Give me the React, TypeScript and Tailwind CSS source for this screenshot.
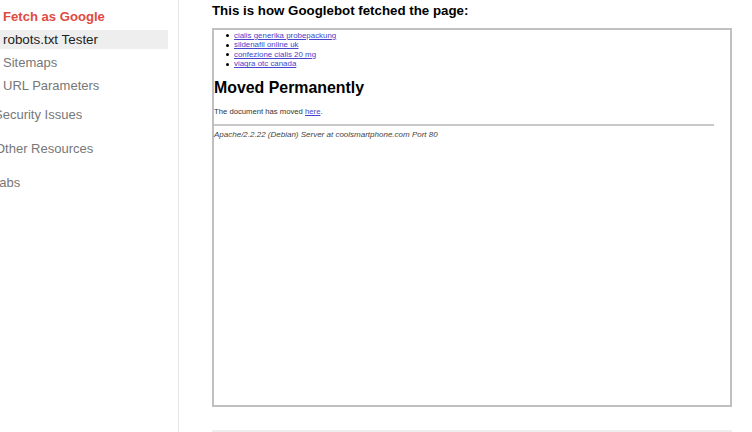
const font = { fontFamily: '"Liberation Sans", Arial, sans-serif' };

const links = ['cialis generika probepackung', 'sildenafil online uk', 'confezione cialis 20 mg', 'viagra otc canada'];

function SideItem({ label, active }: { label: string; active?: boolean }) {
  return (
    <div className={`h-[19px] w-[168px] pl-[3px] leading-[19px] ${active ? 'bg-[#eeeeee] text-[13.4px] text-[#222222]' : 'text-[13px] text-[#777777]'}`}>
      {label}
    </div>
  );
}

function SideGroup({ label, className }: { label: string; className: string }) {
  return <div className={`h-[19px] whitespace-nowrap text-[13px] leading-[19px] text-[#777777] ${className}`}>{label}</div>;
}

export default function App() {
  return (
    <div className="flex h-[432px] w-[752px] overflow-hidden bg-white" style={font}>
      {/* Left nav, cut off at the window edge */}
      <div className="h-full w-[179px] shrink-0 overflow-hidden border-r border-[#e5e5e5] pt-[7px]">
        <div className="h-[23px] pl-[3px] text-[13.1px] font-bold leading-[19px] text-[#e04a3f]">Fetch as Google</div>
        <SideItem label="robots.txt Tester" active />
        <div className="mt-[4px]">
          <SideItem label="Sitemaps" />
        </div>
        <div className="mt-[4px]">
          <SideItem label="URL Parameters" />
        </div>
        <SideGroup label="Security Issues" className="-ml-[6px] mt-[10px]" />
        <SideGroup label="Other Resources" className="-ml-[5px] mt-[15px]" />
        <SideGroup label="Labs" className="-ml-[8px] mt-[15px]" />
      </div>

      {/* Main column */}
      <div className="ml-[33px] flex w-[520px] shrink-0 flex-col">
        <h2 className="h-[28px] pt-[2px] text-[13.3px] font-bold leading-[18px] text-black">This is how Googlebot fetched the page:</h2>
        <div className="h-[380px] border-2 border-[#c0c0c0] pt-[1px]">
          <ul className="ml-[12px] text-[7.9px] leading-[9.5px] text-[#4444cc]">
            {links.map((link) => (
              <li key={link} className="flex items-center gap-[5px]">
                <span className="h-[3px] w-[3px] rounded-full bg-black" />
                <span className="underline">{link}</span>
              </li>
            ))}
          </ul>
          <h1 className="mt-[9px] text-[15.9px] font-bold leading-[20px] text-black">Moved Permanently</h1>
          <p className="mt-[9px] text-[7.7px] leading-[10px] text-[#333333]">
            The document has moved <span className="text-[#4444cc] underline">here</span>.
          </p>
          <div className="mr-[16px] mt-[7px] h-[2px] bg-[#c8c8c8]" />
          <p className="mt-[4px] text-[8px] italic leading-[10px] text-[#444444]">Apache/2.2.22 (Debian) Server at coolsmartphone.com Port 80</p>
        </div>
        <div className="mt-[23px] h-[2px] bg-[#eeeeee]" />
      </div>
    </div>
  );
}
